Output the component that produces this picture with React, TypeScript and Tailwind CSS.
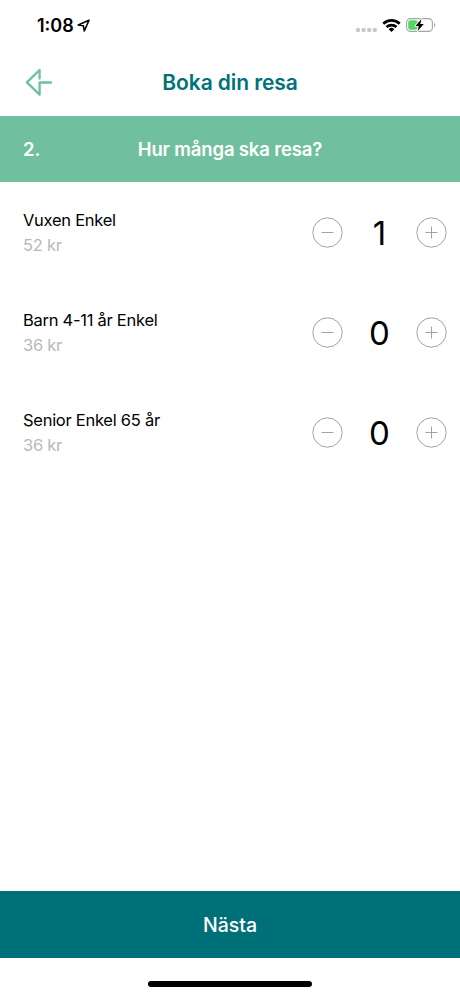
import { useState } from 'react';

type Ticket = { id: string; name: string; price: number };

const tickets: Ticket[] = [
  { id: 'adult', name: 'Vuxen Enkel', price: 52 },
  { id: 'child', name: 'Barn 4-11 år Enkel', price: 36 },
  { id: 'senior', name: 'Senior Enkel 65 år', price: 36 },
];

function StatusBar() {
  return (
    <div className="flex h-[50px] items-center justify-between pl-[37px] pr-6">
      <div className="flex items-center gap-[3px]">
        <span className="pt-0.5 text-[18px] font-semibold leading-none">1:08</span>
        <svg width="13" height="13" viewBox="0 0 13 13" fill="none" stroke="#000" strokeWidth="1.6" strokeLinejoin="round">
          <path d="M12 1.2 1.2 6l5.2.8.9 5.2z" />
        </svg>
      </div>
      <div className="flex items-center gap-[5px]">
        <svg width="21" height="4" viewBox="0 0 21 4" fill="#c9c9c9" className="mt-[10px]">
          <rect x="0" y="0" width="4" height="4" rx="1.2" />
          <rect x="5.6" y="0" width="4" height="4" rx="1.2" />
          <rect x="11.2" y="0" width="4" height="4" rx="1.2" />
          <rect x="16.8" y="0" width="4" height="4" rx="1.2" />
        </svg>
        <svg width="19" height="13" viewBox="0 0 18 13" fill="none" stroke="#000" strokeWidth="2.7">
          <path d="M.8 4.7a11.8 11.8 0 0 1 16.4 0" />
          <path d="M4 8.1a7.3 7.3 0 0 1 10 0" />
          <path d="M9 13 6.2 10.2a4 4 0 0 1 5.6 0z" fill="#000" stroke="none" />
        </svg>
        <svg width="30" height="14" viewBox="0 0 30 14" fill="none">
          <rect x="0.6" y="0.6" width="25.8" height="12.8" rx="3.8" stroke="#a5a5a5" strokeWidth="1.1" />
          <rect x="2.2" y="2.2" width="9.5" height="9.6" rx="2" fill="#4fd964" />
          <path
            d="M15.4 1 9.4 7.9h3.3l-1 5 6.1-6.9h-3.5z"
            fill="#000"
            stroke="#fff"
            strokeWidth="1.8"
            strokeLinejoin="round"
            paintOrder="stroke"
          />
          <path d="M28 4.8c1.8.7 1.8 3.7 0 4.4z" fill="#a5a5a5" />
        </svg>
      </div>
    </div>
  );
}

function RoundButton({ label, plus, onClick }: { label: string; plus?: boolean; onClick: () => void }) {
  return (
    <button aria-label={label} onClick={onClick} className="size-[31px] shrink-0">
      <svg width="31" height="31" viewBox="0 0 31 31" fill="none" stroke="#a3a3a3" strokeWidth="1">
        <circle cx="15.5" cy="15.5" r="14.7" />
        <path d={plus ? 'M9.5 15.5h12M15.5 9.5v12' : 'M9.5 15.5h12'} />
      </svg>
    </button>
  );
}

export default function App() {
  const [counts, setCounts] = useState<Record<string, number>>({ adult: 1, child: 0, senior: 0 });

  const change = (id: string, delta: number) => {
    setCounts((prev) => ({ ...prev, [id]: Math.max(0, prev[id] + delta) }));
  };

  return (
    <div className="flex h-[996px] w-[460px] flex-col bg-white font-['Inter',sans-serif] text-black">
      <StatusBar />

      {/* Header */}
      <header className="grid h-[66px] grid-cols-[80px_1fr_80px] items-center">
        <button aria-label="Tillbaka" className="ml-[25px] w-7">
          <svg width="28" height="30" viewBox="0 0 28 30" fill="none" stroke="#6fc0a0" strokeWidth="2.3" strokeLinecap="round" strokeLinejoin="round">
            <path d="M14.6 10.6V2L1.9 14.4l12.7 12.3V14.5H26" />
          </svg>
        </button>
        <h1 className="pb-0.5 text-center text-[21px] font-semibold leading-none tracking-[-0.1px] text-[#007278]">Boka din resa</h1>
      </header>

      {/* Step */}
      <div className="grid h-[66px] grid-cols-[80px_1fr_80px] items-center bg-[#70c0a0] pt-0.5 text-[18.5px] font-semibold text-white">
        <span className="pl-[23px]">2.</span>
        <h2 className="text-center tracking-[-0.15px]">Hur många ska resa?</h2>
      </div>

      {/* Tickets */}
      <ul className="flex-1">
        {tickets.map((t) => (
          <li key={t.id} className="flex h-[100px] items-center justify-between pl-[23px] pr-[13px]">
            <div className="pt-0.5 text-[16.5px] leading-[25px] tracking-[-0.27px]">
              <p>{t.name}</p>
              <p className="text-[#b8b8b8]">{t.price} kr</p>
            </div>
            <div className="flex items-center">
              <RoundButton label="Ta bort" onClick={() => change(t.id, -1)} />
              <span className="w-[73px] pt-0.5 text-center text-[33px] leading-none">{counts[t.id]}</span>
              <RoundButton label="Lägg till" plus onClick={() => change(t.id, 1)} />
            </div>
          </li>
        ))}
      </ul>

      <button className="h-[67px] bg-[#007078] pt-0.5 text-[19.5px] font-medium text-white">Nästa</button>
      <div className="flex h-[38px] justify-center pt-[23px]">
        <div className="h-[6px] w-[164px] rounded-full bg-black" />
      </div>
    </div>
  );
}
